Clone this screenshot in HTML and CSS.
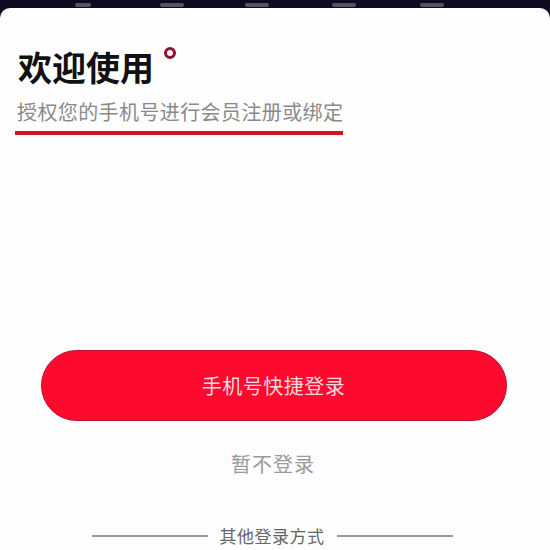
FILE: index.html
```html
<!DOCTYPE html>
<html lang="zh">
<head>
<meta charset="utf-8">
<link rel="stylesheet" href="styles.css">
</head>
<body>
<div class="topbar">
  <span class="blob b1"></span><span class="blob b2"></span><span class="blob b3"></span><span class="blob b4"></span><span class="blob b5"></span>
</div>
<div class="sheet">
  <div class="head">
    <h1 class="title">欢迎使用</h1>
    <span class="dot"></span>
  </div>
  <p class="sub">授权您的手机号进行会员注册或绑定</p>
  <div class="underline"></div>
  <div class="actions">
    <button class="primary">手机号快捷登录</button>
    <div class="skip">暂不登录</div>
    <div class="other"><span class="line"></span><span class="otext">其他登录方式</span><span class="line"></span></div>
  </div>
</div>
</body>
</html>
```
FILE: styles.css
```css
html, body {
  margin: 0;
  padding: 0;
  background: #0d0b22;
  width: 550px;
  height: 550px;
  overflow: hidden;
  font-family: "Noto Sans CJK SC", "Noto Sans", sans-serif;
}
.topbar {
  height: 8px;
  position: relative;
}
.blob {
  position: absolute;
  top: 3px;
  height: 4px;
  width: 24px;
  background: rgba(255,255,255,0.3);
  border-radius: 2px;
}
.b1 { left: 75px; width: 16px; }
.b2 { left: 160px; }
.b3 { left: 245px; }
.b4 { left: 332px; }
.b5 { left: 420px; }
.sheet {
  background: #fdfdfd;
  border-radius: 10px 10px 0 0;
  height: 542px;
  box-sizing: border-box;
  padding: 0 0 0 15px;
  display: flex;
  flex-direction: column;
}
.head {
  display: flex;
  align-items: flex-start;
  margin-top: 35px;
  padding-left: 3px;
}
.title {
  margin: 0;
  font-size: 34px;
  line-height: 48px;
  font-weight: 700;
  color: #111;
}
.dot {
  width: 6px;
  height: 6px;
  border: 3px solid #8e1232;
  border-radius: 50%;
  margin: 4px 0 0 10px;
}
.sub {
  margin: 6px 0 0 2px;
  font-size: 20px;
  line-height: 30px;
  color: #8a8a8a;
  letter-spacing: 0.4px;
}
.underline {
  width: 328px;
  height: 4px;
  background: #d8111f;
  margin-top: 4px;
}
.actions {
  display: flex;
  flex-direction: column;
  align-items: center;
  margin-top: 215px;
  margin-left: -15px;
}
.primary {
  width: 466px;
  height: 71px;
  border-radius: 36px;
  border: 1.5px solid #b8102c;
  background: #ff0a2f;
  color: #f6d8de;
  font-family: inherit;
  font-size: 20px;
  letter-spacing: 0.5px;
  margin-left: -3px;
}
.skip {
  margin-top: 29px;
  font-size: 20px;
  line-height: 28px;
  color: #9a9a9a;
  letter-spacing: 1px;
  margin-left: -4px;
}
.other {
  margin-top: 47px;
  display: flex;
  align-items: center;
  gap: 12px;
  margin-left: -6px;
}
.line {
  width: 116px;
  height: 1.5px;
  background: #9a9a9a;
}
.otext {
  font-size: 17px;
  line-height: 22px;
  color: #666;
  letter-spacing: 0.5px;
}
```
